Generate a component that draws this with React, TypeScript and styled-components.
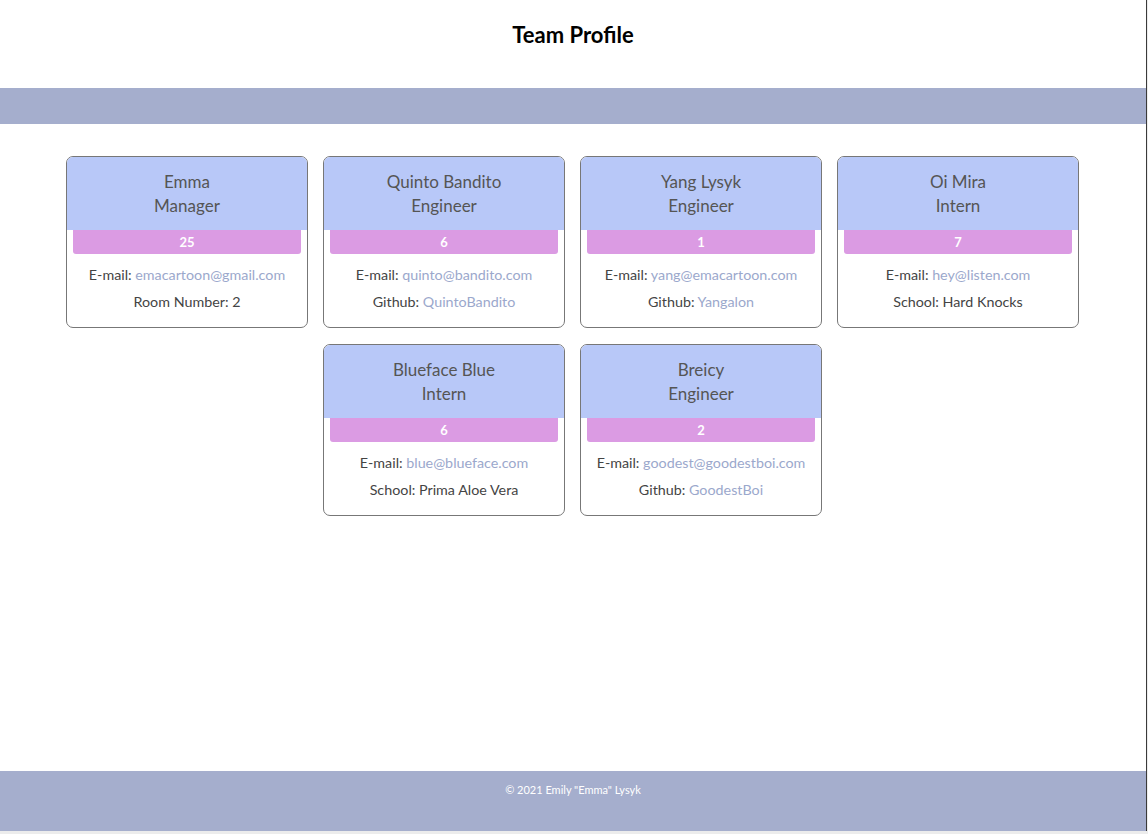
import styled, { createGlobalStyle } from "styled-components";

const BAND_COLOR = "#a5aecd";
const HEADER_COLOR = "#b8c8f8";
const BADGE_COLOR = "#db9be3";
const TEXT_COLOR = "#444";
const LINK_COLOR = "#9ba8cc";

type Member = {
  name: string;
  role: string;
  id: number;
  email: string;
  extraLabel: string;
  extraValue: string;
  extraIsLink?: boolean;
};

const team: Member[] = [
  { name: "Emma", role: "Manager", id: 25, email: "emacartoon@gmail.com", extraLabel: "Room Number", extraValue: "2" },
  { name: "Quinto Bandito", role: "Engineer", id: 6, email: "quinto@bandito.com", extraLabel: "Github", extraValue: "QuintoBandito", extraIsLink: true },
  { name: "Yang Lysyk", role: "Engineer", id: 1, email: "yang@emacartoon.com", extraLabel: "Github", extraValue: "Yangalon", extraIsLink: true },
  { name: "Oi Mira", role: "Intern", id: 7, email: "hey@listen.com", extraLabel: "School", extraValue: "Hard Knocks" },
  { name: "Blueface Blue", role: "Intern", id: 6, email: "blue@blueface.com", extraLabel: "School", extraValue: "Prima Aloe Vera" },
  { name: "Breicy", role: "Engineer", id: 2, email: "goodest@goodestboi.com", extraLabel: "Github", extraValue: "GoodestBoi", extraIsLink: true },
];

const GlobalStyle = createGlobalStyle`
  html, body {
    margin: 0;
    padding: 0;
    height: 100%;
    background: #ececec;
  }
  body {
    font-family: Lato, "Open Sans", sans-serif;
  }
`;

export default function App() {
  return (
    <>
      <GlobalStyle />
      <Page>
        <Header>
          <Title>Team Profile</Title>
        </Header>
        <Band />
        <Main>
          <CardGrid>
            {team.map((m) => (
              <Card key={m.name}>
                <CardHeader>
                  <div>{m.name}</div>
                  <div>{m.role}</div>
                </CardHeader>
                <Badge>{m.id}</Badge>
                <CardBody>
                  <Line>
                    E-mail: <Link href={`mailto:${m.email}`}>{m.email}</Link>
                  </Line>
                  <Line>
                    {m.extraLabel}:{" "}
                    {m.extraIsLink ? <Link href="#">{m.extraValue}</Link> : m.extraValue}
                  </Line>
                </CardBody>
              </Card>
            ))}
          </CardGrid>
        </Main>
        <Footer>© 2021 Emily "Emma" Lysyk</Footer>
      </Page>
    </>
  );
}

const Page = styled.div`
  width: 1146px;
  height: 831px;
  background: #fff;
  border-right: 1px solid #3a3a3a;
  display: flex;
  flex-direction: column;
`;

const Header = styled.header`
  height: 88px;
  display: flex;
  justify-content: center;
`;

const Title = styled.h1`
  margin: 22px 0 0;
  font-size: 22px;
  line-height: 26px;
  font-weight: 700;
  color: #000;
`;

const Band = styled.div`
  height: 36px;
  background: ${BAND_COLOR};
`;

const Main = styled.main`
  flex: 1;
  padding-top: 32px;
`;

const CardGrid = styled.div`
  display: flex;
  flex-wrap: wrap;
  justify-content: center;
  column-gap: 15px;
  row-gap: 16px;
  width: 1015px;
  margin-left: 65px;
`;

const Card = styled.div`
  width: 242px;
  box-sizing: border-box;
  border: 1px solid #777;
  border-radius: 7px;
  overflow: hidden;
  color: ${TEXT_COLOR};
`;

const CardHeader = styled.div`
  background: ${HEADER_COLOR};
  padding: 13px 8px 12px;
  text-align: center;
  font-size: 17px;
  line-height: 24px;
  color: #555;
`;

const Badge = styled.div`
  margin: 0 6px;
  height: 24px;
  line-height: 24px;
  background: ${BADGE_COLOR};
  border-radius: 0 0 3px 3px;
  color: #fff;
  font-weight: 700;
  font-size: 13px;
  text-align: center;
`;

const CardBody = styled.div`
  padding: 11px 6px 15px;
  display: flex;
  flex-direction: column;
  gap: 7px;
`;

const Line = styled.div`
  text-align: center;
  font-size: 14.3px;
  line-height: 20px;
`;

const Link = styled.a`
  color: ${LINK_COLOR};
  text-decoration: none;
`;

const Footer = styled.footer`
  height: 60px;
  background: ${BAND_COLOR};
  color: #fff;
  font-size: 11px;
  text-align: center;
  padding-top: 12px;
  box-sizing: border-box;
`;
